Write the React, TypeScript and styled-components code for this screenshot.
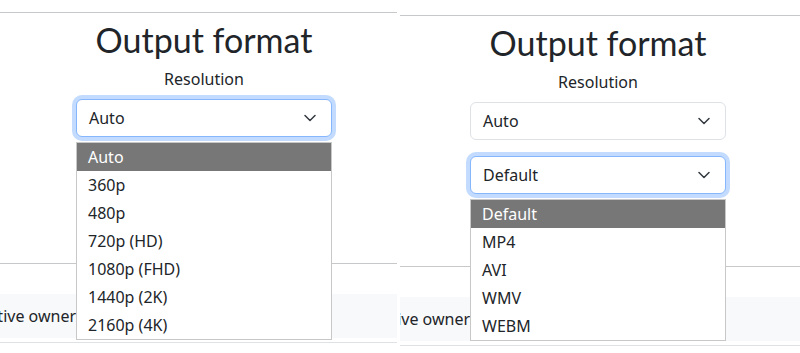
import * as React from "react";
import styled, { createGlobalStyle } from "styled-components";

const GlobalStyle = createGlobalStyle`
  html, body {
    margin: 0;
    padding: 0;
    background: #fff;
  }
  body {
    font-family: "Noto Sans", "Open Sans", sans-serif;
    color: #212529;
  }
`;

const Screens = styled.div`
  display: flex;
  gap: 3px;
  width: 800px;
  height: 353px;
  overflow: hidden;
`;

const Panel = styled.div<{ $width: number }>`
  flex: none;
  width: ${(p) => p.$width}px;
  height: 353px;
  overflow: hidden;
`;

const Page = styled.div<{ $shiftX: number; $top: number }>`
  width: 408px;
  margin-left: ${(p) => -p.$shiftX}px;
  padding-top: ${(p) => p.$top}px;
  display: flex;
  flex-direction: column;
`;

const Rule = styled.hr`
  margin: 0;
  border: 0;
  border-top: 1px solid rgba(33, 37, 41, 0.25);
`;

const Main = styled.main`
  display: flex;
  flex-direction: column;
  align-items: center;
  padding: 5px 0 72px;
`;

const Title = styled.h1`
  margin: 0;
  font-family: Lato, "Noto Sans", sans-serif;
  font-size: 34px;
  line-height: 44px;
  font-weight: 400;
`;

const Label = styled.div`
  margin-top: 6px;
  font-size: 16px;
  line-height: 22px;
`;

const Fields = styled.div`
  margin-top: 9px;
  width: 256px;
  display: flex;
  flex-direction: column;
  gap: 16px;
`;

const Field = styled.div`
  position: relative;
`;

const SelectBox = styled.div<{ $focused?: boolean }>`
  box-sizing: border-box;
  height: 38px;
  padding: 0 15px 0 12px;
  display: flex;
  align-items: center;
  justify-content: space-between;
  font-size: 16px;
  background: #fff;
  border: 1px solid ${(p) => (p.$focused ? "#86b7fe" : "#dee2e6")};
  border-radius: 6px;
  box-shadow: ${(p) => (p.$focused ? "0 0 0 4px rgba(13, 110, 253, 0.25)" : "none")};
`;

const Options = styled.ul`
  position: absolute;
  top: 43px;
  left: 0;
  right: 0;
  z-index: 2;
  margin: 0;
  padding: 0;
  list-style: none;
  background: #fff;
  border: 1px solid #c8c8c8;
`;

const Option = styled.li<{ $active?: boolean }>`
  height: 28px;
  line-height: 28px;
  padding-left: 11px;
  font-size: 16px;
  background: ${(p) => (p.$active ? "#777" : "transparent")};
  color: ${(p) => (p.$active ? "#fff" : "#212529")};
`;

const Footer = styled.footer`
  margin-top: 30px;
  padding-bottom: 4px;
  border-bottom: 1px solid #dee2e6;
`;

const FooterBar = styled.div`
  height: 44px;
  display: flex;
  align-items: center;
  background: #f8f9fa;
`;

const FooterNote = styled.p`
  margin: 0;
  width: 88px;
  display: flex;
  justify-content: flex-end;
  white-space: nowrap;
  font-size: 16px;
`;

const Chevron = () => (
  <svg width="12" height="8" viewBox="0 0 12 8">
    <path d="M1 1.5 6 6.5 11 1.5" fill="none" stroke="#343a40" strokeWidth="1.5" strokeLinecap="round" strokeLinejoin="round" />
  </svg>
);

interface ISelectProps {
  value: string;
  focused?: boolean;
  options?: string[];
}

const Select: React.FC<ISelectProps> = ({ value, focused, options }) => (
  <Field>
    <SelectBox $focused={focused}>
      <span>{value}</span>
      <Chevron />
    </SelectBox>
    {options && (
      <Options>
        {options.map((o) => (
          <Option key={o} $active={o === value}>
            {o}
          </Option>
        ))}
      </Options>
    )}
  </Field>
);

const resolutions = ["Auto", "360p", "480p", "720p (HD)", "1080p (FHD)", "1440p (2K)", "2160p (4K)"];
const formats = ["Default", "MP4", "AVI", "WMV", "WEBM"];

interface IScreenProps {
  width: number;
  shiftX: number;
  top: number;
  open: "resolution" | "format";
}

const Screen: React.FC<IScreenProps> = ({ width, shiftX, top, open }) => (
  <Panel $width={width}>
    <Page $shiftX={shiftX} $top={top}>
      <Rule />
      <Main>
        <Title>Output format</Title>
        <Label>Resolution</Label>
        <Fields>
          <Select value="Auto" focused={open === "resolution"} options={open === "resolution" ? resolutions : undefined} />
          <Select value="Default" focused={open === "format"} options={open === "format" ? formats : undefined} />
        </Fields>
      </Main>
      <Rule />
      <Footer>
        <FooterBar>
          <FooterNote>
            <span>All trademarks belong to their respective owners.</span>
          </FooterNote>
        </FooterBar>
      </Footer>
    </Page>
  </Panel>
);

export default function App() {
  return (
    <>
      <GlobalStyle />
      <Screens>
        <Screen width={397} shiftX={0} top={12} open="resolution" />
        <Screen width={400} shiftX={6} top={15} open="format" />
      </Screens>
    </>
  );
}
